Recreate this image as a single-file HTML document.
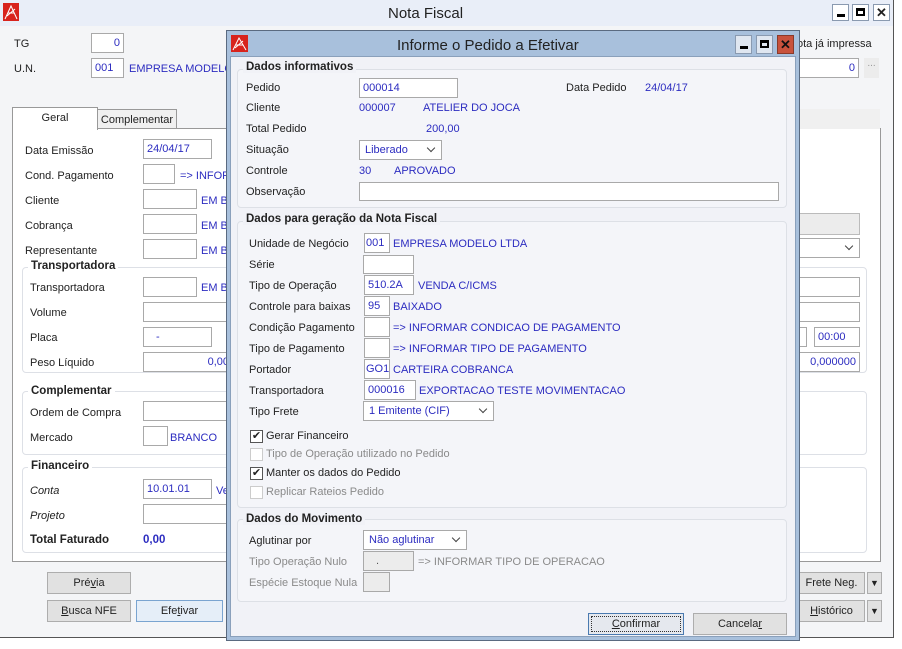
<!DOCTYPE html><html><head><meta charset="utf-8"><style>
*{box-sizing:border-box;margin:0;padding:0}
body{width:902px;height:649px;position:relative;overflow:hidden;background:#fff;font-family:"Liberation Sans",sans-serif;font-size:11px;color:#222}
.a{position:absolute;white-space:nowrap}
.b{color:#2c2cc0}
.in{position:absolute;background:#fff;border:1px solid #a9a9a9;height:20px;line-height:18px;padding:0 3px;color:#2c2cc0;white-space:nowrap}
.g{position:absolute;border:1px solid #dde0e6;border-radius:4px}
.gt{position:absolute;font-weight:bold;font-size:11.5px;padding:0 3px;white-space:nowrap}
.btn{position:absolute;background:#e1e1e1;border:1px solid #adadad;text-align:center;line-height:20px;height:22px}
.sel{position:absolute;background:#fff;border:1px solid #a9a9a9;height:20px;line-height:18px;padding:0 5px;color:#2c2cc0}
.sel:after{content:"";position:absolute;right:7px;top:4px;width:5px;height:5px;border-right:1.5px solid #444;border-bottom:1.5px solid #444;transform:rotate(45deg)}
.cb{position:absolute;width:13px;height:13px;border:1px solid #555;background:#fff}
.cb.d{border-color:#ccc}
.wb{position:absolute;width:17px;height:17px;border:1px solid #8a9ab0;background:#dfe6f0}
.gray{color:#8a8a8a}
</style></head><body>
<div class="a" style="left:0;top:0;width:894px;height:638px;background:#f4f5f7;border-right:1px solid #555;border-bottom:1px solid #555"></div>
<div class="a" style="left:0;top:0;width:893px;height:26px;background:#e9eef8"></div>
<svg class="a" style="left:3px;top:3px" width="16" height="18"><rect width="16" height="18" fill="#d8231c"/><path d="M2 16 L8 3 L14 16 M5 10 L11 10 M4 13 L12 6" stroke="#fff" stroke-width="1" fill="none"/></svg>
<div class="a" style="left:388px;top:5px;font-size:15px">Nota Fiscal</div>
<div class="wb" style="left:832px;top:4px;background:#fff"><div class="a" style="left:4px;top:9px;width:8px;height:3px;background:#000"></div></div>
<div class="wb" style="left:852px;top:4px;background:#fff"><div class="a" style="left:3px;top:3px;width:9px;height:8px;border:2px solid #000;border-top-width:3px"></div></div>
<div class="wb" style="left:873px;top:4px;background:#fff;font-weight:bold;text-align:center;line-height:15px;font-size:13px">✕</div>

<div class="a" style="left:14px;top:38px">TG</div>
<div class="in" style="left:91px;top:33px;width:33px;text-align:right">0</div>
<div class="a" style="left:14px;top:63px">U.N.</div>
<div class="in" style="left:91px;top:58px;width:33px">001</div>
<div class="a b" style="left:129px;top:63px">EMPRESA MODELO</div>
<div class="a" style="left:797px;top:38px">ota já impressa</div>
<div class="in" style="left:790px;top:58px;width:69px;text-align:right">0</div>
<div class="a" style="left:864px;top:58px;width:15px;height:20px;background:#ececec;color:#999;text-align:center;font-size:10px">...</div>

<div class="a" style="left:12px;top:128px;width:869px;height:434px;background:#fff;border:1px solid #999"></div>
<div class="a" style="left:12px;top:107px;width:86px;height:23px;background:#fff;border:1px solid #999;border-bottom:none;text-align:center;padding-top:4px">Geral</div>
<div class="a" style="left:97px;top:109px;width:80px;height:20px;background:#f0f0f0;border:1px solid #999;text-align:center;padding-top:4px">Complementar</div>
<div class="a" style="left:790px;top:109px;width:90px;height:20px;background:#f0f0f0"></div>

<div class="a" style="left:25px;top:145px">Data Emissão</div><div class="in" style="left:143px;top:139px;width:69px">24/04/17</div>
<div class="a" style="left:25px;top:170px">Cond. Pagamento</div><div class="in" style="left:143px;top:164px;width:32px"></div><div class="a b" style="left:180px;top:170px">=> INFOR</div>
<div class="a" style="left:25px;top:195px">Cliente</div><div class="in" style="left:143px;top:189px;width:54px"></div><div class="a b" style="left:201px;top:195px">EM B</div>
<div class="a" style="left:25px;top:220px">Cobrança</div><div class="in" style="left:143px;top:214px;width:54px"></div><div class="a b" style="left:201px;top:220px">EM B</div>
<div class="a" style="left:25px;top:245px">Representante</div><div class="in" style="left:143px;top:239px;width:54px"></div><div class="a b" style="left:201px;top:245px">EM B</div>

<div class="g" style="left:22px;top:267px;width:845px;height:106px"></div><div class="gt" style="left:28px;top:260px;background:#fff">Transportadora</div>
<div class="a" style="left:30px;top:282px">Transportadora</div><div class="in" style="left:143px;top:277px;width:54px"></div><div class="a b" style="left:201px;top:282px">EM B</div>
<div class="a" style="left:30px;top:307px">Volume</div><div class="in" style="left:143px;top:302px;width:90px"></div>
<div class="a" style="left:30px;top:332px">Placa</div><div class="in" style="left:143px;top:327px;width:69px;padding-left:12px">-</div>
<div class="a" style="left:30px;top:357px">Peso Líquido</div><div class="in" style="left:143px;top:352px;width:90px;text-align:right">0,00</div>
<div class="a" style="left:790px;top:213px;width:70px;height:22px;background:#ececec;border:1px solid #bbb"></div>
<div class="sel" style="left:790px;top:238px;width:70px"></div>
<div class="in" style="left:790px;top:277px;width:70px"></div>
<div class="in" style="left:790px;top:302px;width:70px"></div>
<div class="in" style="left:790px;top:327px;width:17px"></div>
<div class="in" style="left:814px;top:327px;width:46px">00:00</div>
<div class="in" style="left:790px;top:352px;width:70px;text-align:right">0,000000</div>

<div class="g" style="left:22px;top:391px;width:845px;height:64px"></div><div class="gt" style="left:28px;top:385px;background:#fff">Complementar</div>
<div class="a" style="left:30px;top:407px">Ordem de Compra</div><div class="in" style="left:143px;top:401px;width:90px"></div>
<div class="a" style="left:30px;top:432px">Mercado</div><div class="in" style="left:143px;top:426px;width:25px"></div><div class="a b" style="left:170px;top:432px">BRANCO</div>
<div class="g" style="left:22px;top:467px;width:845px;height:86px"></div><div class="gt" style="left:28px;top:460px;background:#fff">Financeiro</div>
<div class="a" style="left:30px;top:485px;font-style:italic">Conta</div><div class="in" style="left:143px;top:479px;width:69px">10.01.01</div><div class="a b" style="left:216px;top:485px">Ve</div>
<div class="a" style="left:30px;top:510px;font-style:italic">Projeto</div><div class="in" style="left:143px;top:504px;width:90px"></div>
<div class="a" style="left:30px;top:534px;font-weight:bold;font-size:11.5px">Total Faturado</div><div class="a b" style="left:143px;top:534px;font-weight:bold;font-size:11.5px">0,00</div>

<div class="btn" style="left:47px;top:572px;width:84px">Pré<u>v</u>ia</div>
<div class="btn" style="left:47px;top:600px;width:84px"><u>B</u>usca NFE</div>
<div class="btn" style="left:136px;top:600px;width:87px;border-color:#7aa4d0;background:#e5eef8">Efe<u>t</u>ivar</div>
<div class="btn" style="left:798px;top:572px;width:67px">Frete Ne<u>g</u>.</div>
<div class="btn" style="left:867px;top:572px;width:15px;font-size:9px">▼</div>
<div class="btn" style="left:798px;top:600px;width:67px"><u>H</u>istórico</div>
<div class="btn" style="left:867px;top:600px;width:15px;font-size:9px">▼</div>

<div class="a" style="left:226px;top:30px;width:574px;height:611px;background:#a8c0dc;border:1px solid #5a6a80"></div>
<div class="a" style="left:230px;top:56px;width:566px;height:581px;background:#f1f2f7;border:1px solid #8aa0bb"></div>
<svg class="a" style="left:231px;top:35px" width="17" height="17"><rect width="17" height="17" fill="#d8231c"/><path d="M2 15 L8 3 L15 15 M5 10 L12 10 M4 13 L12 6" stroke="#fff" stroke-width="1" fill="none"/></svg>
<div class="a" style="left:397px;top:37px;font-size:15px;color:#222">Informe o Pedido a Efetivar</div>
<div class="wb" style="left:735px;top:35px;height:19px"><div class="a" style="left:4px;top:10px;width:8px;height:3px;background:#000"></div></div>
<div class="wb" style="left:756px;top:35px;height:19px"><div class="a" style="left:3px;top:4px;width:9px;height:8px;border:2px solid #000;border-top-width:3px"></div></div>
<div class="wb" style="left:777px;top:35px;height:19px;background:#c8523c;border-color:#8a3a2a;font-weight:bold;text-align:center;line-height:17px;font-size:13px;color:#111">✕</div>

<div class="g" style="left:237px;top:69px;width:550px;height:139px;background:#f4f5f9"></div><div class="gt" style="left:243px;top:61px;background:#f1f2f7">Dados informativos</div>
<div class="a" style="left:246px;top:82px">Pedido</div><div class="in" style="left:359px;top:78px;width:99px">000014</div>
<div class="a" style="left:566px;top:82px">Data Pedido</div><div class="a b" style="left:645px;top:82px">24/04/17</div>
<div class="a" style="left:246px;top:102px">Cliente</div><div class="a b" style="left:359px;top:102px">000007</div><div class="a b" style="left:423px;top:102px">ATELIER DO JOCA</div>
<div class="a" style="left:246px;top:123px">Total Pedido</div><div class="a b" style="left:426px;top:123px">200,00</div>
<div class="a" style="left:246px;top:144px">Situação</div><div class="sel" style="left:359px;top:140px;width:83px">Liberado</div>
<div class="a" style="left:246px;top:165px">Controle</div><div class="a b" style="left:359px;top:165px">30</div><div class="a b" style="left:394px;top:165px">APROVADO</div>
<div class="a" style="left:246px;top:186px">Observação</div><div class="in" style="left:359px;top:182px;width:420px;height:19px"></div>

<div class="g" style="left:237px;top:221px;width:550px;height:287px;background:#f4f5f9"></div><div class="gt" style="left:243px;top:213px;background:#f1f2f7">Dados para geração da Nota Fiscal</div>
<div class="a" style="left:249px;top:238px">Unidade de Negócio</div><div class="in" style="left:364px;top:233px;width:26px;padding:0 1px">001</div><div class="a b" style="left:393px;top:238px">EMPRESA MODELO LTDA</div>
<div class="a" style="left:249px;top:259px">Série</div><div class="in" style="left:363px;top:255px;width:51px;height:19px"></div>
<div class="a" style="left:249px;top:280px">Tipo de Operação</div><div class="in" style="left:364px;top:275px;width:50px">510.2A</div><div class="a b" style="left:418px;top:280px">VENDA C/ICMS</div>
<div class="a" style="left:249px;top:301px">Controle para baixas</div><div class="in" style="left:364px;top:296px;width:26px">95</div><div class="a b" style="left:393px;top:301px">BAIXADO</div>
<div class="a" style="left:249px;top:322px">Condição Pagamento</div><div class="in" style="left:364px;top:317px;width:26px"></div><div class="a b" style="left:393px;top:322px">=> INFORMAR CONDICAO DE PAGAMENTO</div>
<div class="a" style="left:249px;top:343px">Tipo de Pagamento</div><div class="in" style="left:364px;top:338px;width:26px"></div><div class="a b" style="left:393px;top:343px">=> INFORMAR TIPO DE PAGAMENTO</div>
<div class="a" style="left:249px;top:364px">Portador</div><div class="in" style="left:364px;top:359px;width:26px;padding:0 1px">GO1</div><div class="a b" style="left:393px;top:364px">CARTEIRA COBRANCA</div>
<div class="a" style="left:249px;top:385px">Transportadora</div><div class="in" style="left:364px;top:380px;width:52px">000016</div><div class="a b" style="left:419px;top:385px">EXPORTACAO TESTE MOVIMENTACAO</div>
<div class="a" style="left:249px;top:406px">Tipo Frete</div><div class="sel" style="left:363px;top:401px;width:131px">1 Emitente (CIF)</div>
<div class="cb" style="left:250px;top:430px;font-size:11px;line-height:11px;text-align:center">✔</div><div class="a" style="left:266px;top:430px">Gerar Financeiro</div>
<div class="cb d" style="left:250px;top:448px"></div><div class="a gray" style="left:266px;top:448px">Tipo de Operação utilizado no Pedido</div>
<div class="cb" style="left:250px;top:467px;font-size:11px;line-height:11px;text-align:center">✔</div><div class="a" style="left:266px;top:467px">Manter os dados do Pedido</div>
<div class="cb d" style="left:250px;top:486px"></div><div class="a gray" style="left:266px;top:486px">Replicar Rateios Pedido</div>

<div class="g" style="left:237px;top:519px;width:550px;height:83px;background:#f4f5f9"></div><div class="gt" style="left:243px;top:513px;background:#f1f2f7">Dados do Movimento</div>
<div class="a" style="left:249px;top:535px">Aglutinar por</div><div class="sel" style="left:363px;top:530px;width:104px">Não aglutinar</div>
<div class="a gray" style="left:249px;top:556px">Tipo Operação Nulo</div><div class="in" style="left:363px;top:551px;width:51px;background:#ececec;color:#555;padding-left:12px">.</div><div class="a gray" style="left:418px;top:556px">=> INFORMAR TIPO DE OPERACAO</div>
<div class="a gray" style="left:249px;top:577px">Espécie Estoque Nula</div><div class="in" style="left:363px;top:572px;width:27px;background:#ececec"></div>

<div class="btn" style="left:588px;top:613px;width:96px;border-color:#4a7ab0;background:#e5e8ee;outline:1px dotted #333;outline-offset:-4px"><u>C</u>onfirmar</div>
<div class="btn" style="left:693px;top:613px;width:94px">Cancela<u>r</u></div>
</body></html>
